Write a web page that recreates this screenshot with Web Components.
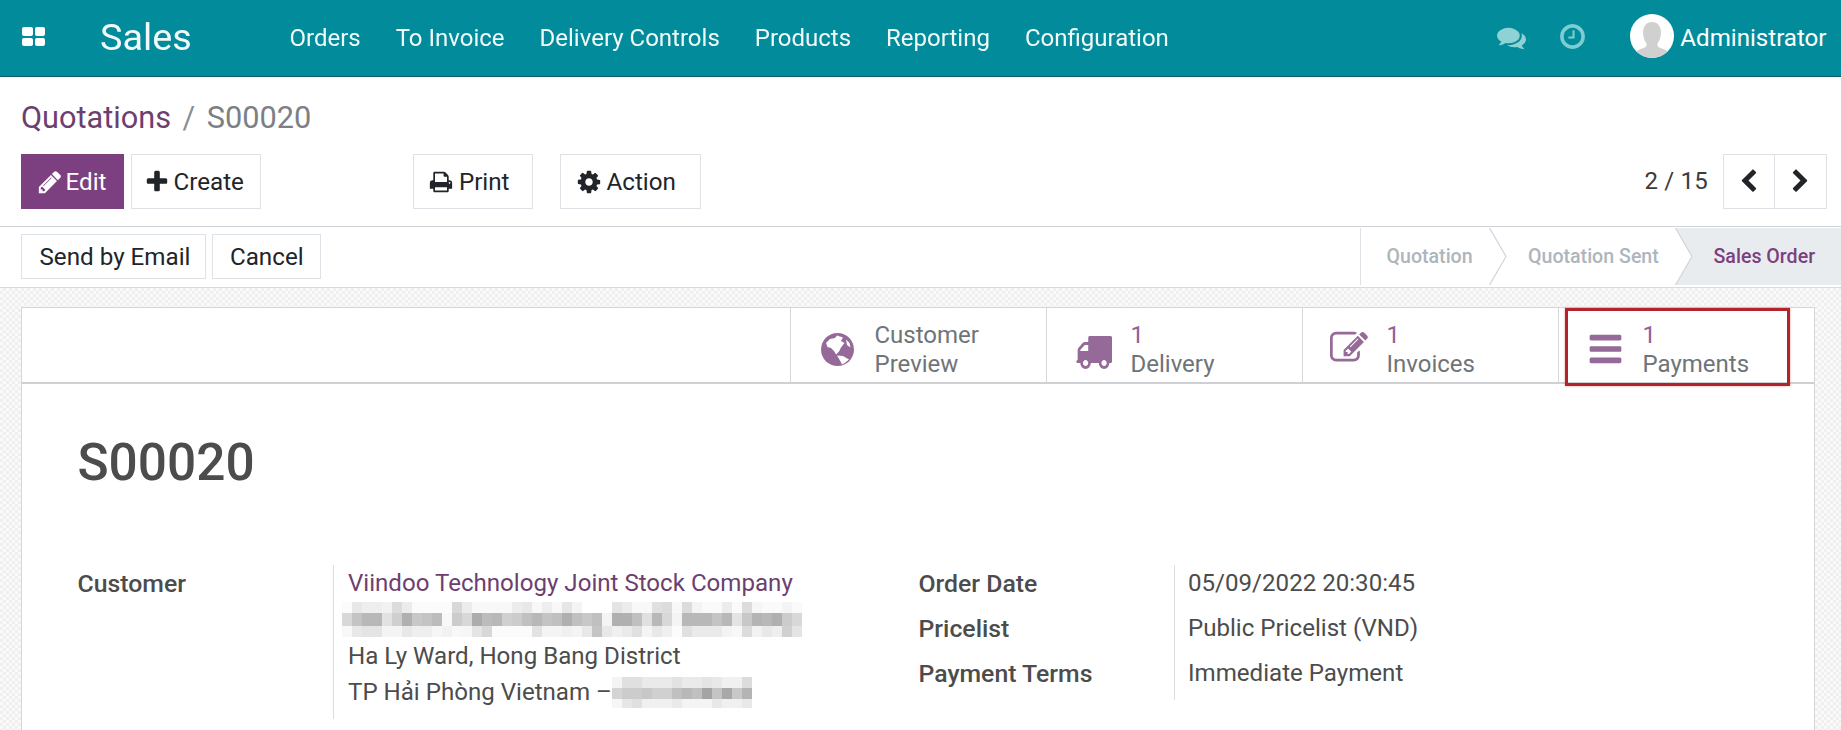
<!DOCTYPE html>
<html lang="en"><head><meta charset="utf-8"><title>S00020</title>
<style>
html,body{margin:0;padding:0;background:#fff}
body{width:1841px;height:730px;overflow:hidden;font-family:Roboto,"Liberation Sans",sans-serif;font-size:24px;color:#4c4c4c}
</style></head><body>
<app-shell></app-shell>
<script>
const P={
pencil:"M491 1536l91-91-235-235-91 91v107h128v128h107zm523-928q0-22-22-22-10 0-17 7l-542 542q-7 7-7 17 0 22 22 22 10 0 17-7l542-542q7-7 7-17zm-54-192l416 416-832 832h-416v-416zm683 96q0 53-37 90l-166 166-416-416 166-165q36-38 90-38 53 0 91 38l235 234q37 39 37 91z",
plus:"M1600 736v192q0 40-28 68t-68 28h-416v416q0 40-28 68t-68 28h-192q-40 0-68-28t-28-68v-416h-416q-40 0-68-28t-28-68v-192q0-40 28-68t68-28h416v-416q0-40 28-68t68-28h192q40 0 68 28t28 68v416h416q40 0 68 28t28 68z",
print:"M448 1536h896v-256h-896v256zm0-640h896v-384h-160q-40 0-68-28t-28-68v-160h-640v640zm1152 64q0-26-19-45t-45-19-45 19-19 45 19 45 45 19 45-19 19-45zm128 0v416q0 13-9.500 22.500t-22.500 9.500h-224v160q0 40-28 68t-68 28h-960q-40 0-68-28t-28-68v-160h-224q-13 0-22.500-9.500t-9.500-22.500v-416q0-79 56.500-135.500t135.500-56.500h64v-544q0-40 28-68t68-28h672q40 0 88 20t76 48l152 152q28 28 48 76t20 88v256h64q79 0 135.500 56.500t56.500 135.500z",
cog:"M1152 896q0-106-75-181t-181-75-181 75-75 181 75 181 181 75 181-75 75-181zm512-109v222q0 12-8 23t-20 13l-185 28q-19 54-39 91 35 50 107 138 10 12 10 25t-9 23q-27 37-99 108t-94 71q-12 0-26-9l-138-108q-44 23-91 38-16 136-29 186-7 28-36 28h-222q-14 0-24.500-8.500t-11.500-21.500l-28-184q-49-16-90-37l-141 107q-10 9-25 9-14 0-25-11-126-114-165-168-7-10-7-23 0-12 8-23 15-21 51-66.500t54-70.500q-27-50-41-99l-183-27q-13-2-21-12.500t-8-23.500v-222q0-12 8-23t19-13l186-28q14-46 39-92-40-57-107-138-10-12-10-24 0-10 9-23 26-36 98.500-107.500t94.500-71.500q13 0 26 10l138 107q44-23 91-38 16-136 29-186 7-28 36-28h222q14 0 24.500 8.500t11.500 21.500l28 184q49 16 90 37l142-107q9-9 24-9 13 0 25 10 129 119 165 170 7 8 7 22 0 12-8 23-15 21-51 66.500t-54 70.500q26 50 41 98l183 28q13 2 21 12.500t8 23.500z",
left:"M1427 301l-531 531 531 531q19 19 19 45t-19 45l-166 166q-19 19-45 19t-45-19l-742-742q-19-19-19-45t19-45l742-742q19-19 45-19t45 19l166 166q19 19 19 45t-19 45z",
right:"M1363 877l-742 742q-19 19-45 19t-45-19l-166-166q-19-19-19-45t19-45l531-531-531-531q-19-19-19-45t19-45l166-166q19-19 45-19t45 19l742 742q19 19 19 45t-19 45z",
comments:"M1408 768q0 139-94 257t-256.500 186.500-353.500 68.500q-86 0-176-16-124 88-278 128-36 9-86 16h-3q-11 0-20.500-8t-11.500-21q-1-3-1-6.500t.5-6.500 2-6l2.500-5 3.500-5.500 4-5 4.500-5 4-4.500q5-6 23-25t26-29.500 22.500-29 25-38.500 20.500-44q-124-72-195-177t-71-224q0-139 94-257t256.500-186.500 353.500-68.500 353.500 68.500 256.500 186.500 94 257zm384 256q0 120-71 224.500t-195 176.500q10 24 20.500 44t25 38.500 22.500 29 26 29.500 23 25q1 1 4 4.500t4.500 5 4 5 3.500 5.500l2.500 5 2 6 .5 6.500-1 6.500q-3 14-13 22t-22 7q-50-7-86-16-154-40-278-128-90 16-176 16-271 0-472-132 58 4 88 4 161 0 309-45t264-129q125-92 192-212t67-254q0-77-23-152 129 71 204 178t75 230z",
clock:"M1024 544v448q0 14-9 23t-23 9h-320q-14 0-23-9t-9-23v-64q0-14 9-23t23-9h224v-352q0-14 9-23t23-9h64q14 0 23 9t9 23zm416 352q0-148-73-273t-198-198-273-73-273 73-198 198-73 273 73 273 198 198 273 73 273-73 198-198 73-273zm224 0q0 209-103 385.500t-279.500 279.500-385.500 103-385.500-103-279.500-279.500-103-385.500 103-385.500 279.500-279.500 385.500-103 385.500 103 279.500 279.500 103 385.500z",
truck:"M640 1408q0-52-38-90t-90-38-90 38-38 90 38 90 90 38 90-38 38-90zm-384-512h384v-256h-158q-13 0-22 9l-195 195q-9 9-9 22v30zm1280 512q0-52-38-90t-90-38-90 38-38 90 38 90 90 38 90-38 38-90zm256-1088v1024q0 15-4 26.500t-13.500 18.500-16.500 11.500-23.500 6-22.500 2-25.500 0-22.500-.5q0 106-75 181t-181 75-181-75-75-181h-384q0 106-75 181t-181 75-181-75-75-181h-64q-3 0-22.500.5t-25.500 0-22.500-2-23.500-6-16.500-11.500-13.500-18.500-4-26.500q0-26 19-45t45-19v-320q0-8-.5-35t0-38 2.500-34.500 6.500-37 14-30.500 22.500-30l198-198q19-19 50.500-32t58.500-13h160v-192q0-26 19-45t45-19h1024q26 0 45 19t19 45z",
edit:"M888 1184l116-116-152-152-116 116v56h96v96h56zm440-720q-16-16-33 1l-350 350q-17 17-1 33t33-1l350-350q17-17 1-33zm80 594v190q0 119-84.500 203.500t-203.500 84.500h-832q-119 0-203.500-84.500t-84.500-203.500v-832q0-119 84.500-203.500t203.500-84.500h832q63 0 117 25 15 7 18 23 3 17-9 29l-49 49q-14 14-32 8-23-6-45-6h-832q-66 0-113 47t-47 113v832q0 66 47 113t113 47h832q66 0 113-47t47-113v-126q0-13 9-22l64-64q15-15 35-7t20 29zm-96-738l288 288-672 672h-288v-288zm444 132l-92 92-288-288 92-92q28-28 68-28t68 28l152 152q28 28 28 68t-28 68z",
bars:"M1664 1344v128q0 26-19 45t-45 19h-1408q-26 0-45-19t-19-45v-128q0-26 19-45t45-19h1408q26 0 45 19t19 45zm0-512v128q0 26-19 45t-45 19h-1408q-26 0-45-19t-19-45v-128q0-26 19-45t45-19h1408q26 0 45 19t19 45zm0-512v128q0 26-19 45t-45 19h-1408q-26 0-45-19t-19-45v-128q0-26 19-45t45-19h1408q26 0 45 19t19 45z"
};
const ico=(n,w,h)=>`<svg width="${w}" height="${h}" viewBox="0 0 1792 1792" preserveAspectRatio="none" fill="currentColor" style="display:block;flex:none"><path d="${P[n]}"/></svg>`;
class Base extends HTMLElement{
  constructor(){super();this.attachShadow({mode:'open'});}
  html(s){this.shadowRoot.innerHTML=s;}
}
const def=(n,c)=>customElements.define(n,c);

def('nav-item',class extends Base{connectedCallback(){this.html(`<style>:host{display:block;padding:0 17.5px;color:#fff;font-size:24px;line-height:76px;font-weight:400;opacity:.95}</style><slot></slot>`);}});

def('top-nav',class extends Base{connectedCallback(){this.html(`<style>
:host{display:flex;align-items:stretch;height:76px;background:#028c9b;border-bottom:1px solid #045f6a;color:#fff}
.apps{width:23px;height:19px;margin:27px 0 0 22px;display:grid;grid-template-columns:1fr 1fr;gap:2px;flex:none}
.apps i{background:#fff;border-radius:2px}
.brand{font-size:37.8px;font-weight:400;line-height:74px;margin-left:55px;width:172px;flex:none;opacity:.95}
.menu{display:flex}
.right{margin-left:auto;display:flex;align-items:flex-start;padding-right:14.5px}
.comments{margin:23.5px 0 0;color:#8fd2d6}
.clock{margin:22px 0 0 32px;color:#7fccd2}
.ava{width:44px;height:44px;border-radius:50%;background:#fff;margin:14px 0 0 43px;overflow:hidden;flex:none}
.user{font-size:24.1px;line-height:76px;margin-left:6.5px;font-weight:400;white-space:nowrap}
</style>
<div class="apps"><i></i><i></i><i></i><i></i></div>
<div class="brand">Sales</div>
<div class="menu"><nav-item>Orders</nav-item><nav-item>To Invoice</nav-item><nav-item>Delivery Controls</nav-item><nav-item>Products</nav-item><nav-item>Reporting</nav-item><nav-item>Configuration</nav-item></div>
<div class="right">
<span class="comments">${ico('comments',29,27)}</span>
<span class="clock">${ico('clock',29,29)}</span>
<div class="ava"><svg width="44" height="44" viewBox="0 0 44 44" style="display:block"><path fill="#d0d0d0" d="M22 8c6 0 9 4.500 9 11 0 4-1.600 8-3.500 10.500-.6 2.500.5 3.500 3 4.500 3.500 1.200 7 2.500 9 4.500C35.500 42 29 44 22 44S8.500 42 4.500 38.500c2-2 5.500-3.300 9-4.500 2.500-1 3.600-2 3-4.500C14.600 27 13 23 13 19c0-6.500 3-11 9-11z"/></svg></div>
<div class="user">Administrator</div>
</div>`);}});

def('bread-crumb',class extends Base{connectedCallback(){this.html(`<style>
:host{display:flex;align-items:center;height:77px;font-size:30.7px;padding-top:4px;box-sizing:border-box;white-space:nowrap}
.a{color:#6c3f70}.s{color:#8a8f94;margin:0 11.5px}.c{color:#7c8085}
</style><span class="a">Quotations</span><span class="s">/</span><span class="c">S00020</span>`);}});

def('odoo-btn',class extends Base{connectedCallback(){
 const icon=this.getAttribute('icon'),pri=this.hasAttribute('primary');
 const pl=this.getAttribute('pl')||'17px',pr=this.getAttribute('pr')||pl,g=this.getAttribute('gap')||'3px',s=this.getAttribute('iw')||26;
 this.html(`<style>
:host{display:inline-flex;align-items:center;height:var(--h,55px);box-sizing:border-box;border:1.5px solid ${pri?'#7c3f80':'#dee2e6'};background:${pri?'#7c3f80':'#fff'};color:${pri?'#fff':'#212529'};font-size:24.2px;padding:0 ${pr} 0 ${pl};white-space:nowrap;gap:${g};flex:none}
</style>${icon?ico(icon,s,s):''}<slot></slot>`);}});

def('pager-bar',class extends Base{connectedCallback(){this.html(`<style>
:host{display:flex;align-items:center;margin-left:auto;font-size:24px;color:#3c3c3c;letter-spacing:.2px}
.count{margin-right:14.5px;position:relative;top:-1px}
.b{width:52px;height:55px;box-sizing:border-box;border:1.5px solid #dee2e6;display:flex;align-items:center;justify-content:center;color:#212529}
.b+.b{border-left:0}
</style><span class="count">2 / 15</span><div class="b">${ico('left',25,25)}</div><div class="b">${ico('right',25,25)}</div>`);}});

def('status-bar',class extends Base{connectedCallback(){
 const chev=`<svg class="chev" width="18" height="57" viewBox="0 0 18 57"><path d="M.5 0L17 28.500.5 57" fill="#fff" stroke="#ced4da" stroke-width="1.200"/></svg>`;
 this.html(`<style>
:host{display:flex;margin-left:auto;height:57px;align-self:flex-start;margin-top:1px;font-size:19.6px;font-weight:500;color:#adb5bd;border-left:1.200px solid #dee2e6;white-space:nowrap}
.it{position:relative;display:flex;align-items:center;box-sizing:border-box}
.q{width:128.500px;padding-left:26px}
.s{width:186px;padding-left:39px}
.o{width:166px;padding-left:38.5px;background:#e9ecef;color:#7c3f80;clip-path:polygon(0 0,100% 0,100% 100%,0 100%,17px 50%)}
.chev{position:absolute;left:100%;top:0;z-index:1;margin-left:-.5px}
</style><div class="it q">Quotation${chev}</div><div class="it s">Quotation Sent${chev}</div><div class="it o">Sales Order</div>`);}});

def('control-panel',class extends Base{connectedCallback(){this.html(`<style>
:host{display:block;background:#fff;border-bottom:1.500px solid #d8dade}
.top{padding:0 14.5px 17px 21px;border-bottom:1.500px solid #d0d3d8}
.bar{display:flex;align-items:center}
.gap1{margin-left:7px}.gap2{margin-left:152px}.gap3{margin-left:26.5px}
.st{display:flex;padding-left:21px;height:59.5px;align-items:flex-start}
.st odoo-btn{--h:45px;margin-top:7px}
.st odoo-btn+odoo-btn{margin-left:6px}
</style>
<div class="top"><bread-crumb></bread-crumb>
<div class="bar">
<odoo-btn primary icon="pencil" pl="14.5px" pr="16.5px">Edit</odoo-btn>
<odoo-btn class="gap1" icon="plus" pl="12.5px" pr="16.5px">Create</odoo-btn>
<odoo-btn class="gap2" icon="print" iw="24" pl="14.5px" pr="22.5px" gap="6px">Print</odoo-btn>
<odoo-btn class="gap3" icon="cog" pl="15px" pr="24px" gap="5px">Action</odoo-btn>
<pager-bar></pager-bar>
</div></div>
<div class="st"><odoo-btn pl="17.5px" pr="15px">Send by Email</odoo-btn><odoo-btn pl="16.5px">Cancel</odoo-btn><status-bar></status-bar></div>`);}});

const ICO_OFFSET={globe:9,truck:12,edit:6,bars:9};
def('stat-button',class extends Base{connectedCallback(){
 const n=this.getAttribute('icon'),num=this.getAttribute('num'),w=+this.getAttribute('iw'),h=+this.getAttribute('ih');
 const g=n==='globe'?`<svg width="33" height="33" viewBox="0 0 33 33" style="display:block"><circle cx="16.500" cy="16.500" r="16.500" fill="currentColor"/><path fill="#fff" d="M5 10l4-4 5-1 2-2.500 6 2-2 3.500 3.500 2-3.500 4.500-2 4-3 3-2-3.500-3-3-3.500-1zM16 22.500l6 .5 6 3.500-3.500 3-3.500 2-2-4zM25 6.500l3.500 3.500 1 4.500-3.500-2.500z"/></svg>`:ico(n,w,h);
 this.html(`<style>
:host{display:flex;width:256px;height:74px;box-sizing:border-box;border-left:1.200px solid #d6d9dc;position:relative;color:#6f7478;font-size:24px;line-height:29.5px;flex:none}
.ic{width:42px;margin-left:25px;display:flex;align-items:center;justify-content:center;color:#956a99;flex:none;padding-top:${ICO_OFFSET[n]}px;box-sizing:border-box}
.tx{margin-left:16.5px;padding-top:13px;white-space:nowrap}
.n{color:#8f6195;display:block}
.mark{position:absolute;left:6px;top:0;width:225px;height:78.500px;border:3px solid #b0242a;box-sizing:border-box;box-shadow:0 0 2px rgba(230,80,90,.6)}
</style><div class="ic">${g}</div><div class="tx">${num?`<span class="n">${num}</span>`:''}<slot></slot></div>${this.hasAttribute('marked')?'<div class="mark"></div>':''}`);}});

def('button-box',class extends Base{connectedCallback(){this.html(`<style>
:host{display:flex;justify-content:flex-end;height:74.5px;border-bottom:2.500px solid #ced0d3}
</style><slot></slot>`);}});

def('pixel-mosaic',class extends Base{connectedCallback(){
 const rows=this.getAttribute('rows').split('/').map(r=>r.trim().split(/\s+/));
 const hs=this.getAttribute('hs').split(',').map(Number);
 let y=0,s='';
 rows.forEach((r,i)=>{r.forEach((c,j)=>{s+=`<rect x="${j*10}" y="${y}" width="10.500" height="${hs[i]+.5}" fill="#${c+c+c}"/>`;});y+=hs[i];});
 const w=rows[0].length*10;
 this.html(`<style>:host{display:inline-block;vertical-align:middle;line-height:0}svg{display:block;filter:blur(.5px)}</style><svg width="${w}" height="${y}" viewBox="0 0 ${w} ${y}">${s}</svg>`);}});

def('field-row',class extends Base{connectedCallback(){this.html(`<style>
:host{display:grid;grid-template-columns:var(--lab) 1fr}
.l{font-weight:500;font-size:24.8px;color:#4c4c4c;line-height:37px;height:var(--rh,45px)}
.v{border-left:1.200px solid #dcdfe2;padding-left:var(--vp);line-height:37px;font-size:24.1px;color:#4c4c4c;white-space:nowrap;padding-bottom:var(--vb,8px)}
</style><div class="l"><slot name="label"></slot></div><div class="v"><slot></slot></div>`);}});

def('sale-form',class extends Base{connectedCallback(){this.html(`<style>
:host{display:block;padding:0 0 0 55.5px}
h1{margin:0;padding-top:49px;font-size:51.4px;font-weight:500;line-height:59px;color:#4c4c4c;height:132px;letter-spacing:0}
.cols{display:flex}
.c1{width:841px;flex:none;--lab:255px;--vp:14.5px;--vb:8px;--rh:auto}
.c2{--lab:255px;--vp:13.5px;width:600px}
.line{height:36.5px;display:flex;align-items:center}
a{color:#6c3f70;text-decoration:none}
.m1{margin-left:-6px}
</style>
<h1>S00020</h1>
<div class="cols">
<div class="c1"><field-row><span slot="label">Customer</span>
<div class="line"><a>Viindoo Technology Joint Stock Company</a></div>
<div class="line m1"><pixel-mosaic hs="11,13,11" rows="fb e8 ee ee f2 dc ec fb fb fb fb d8 ec f8 f8 f8 f8 ec e8 f8 ee f8 e6 f4 ff ff ff e4 ec f8 f8 e0 dc f8 dc f4 fa fa ec fa dc f6 fa fa f4 fa/d8 c4 b8 b8 e2 cf b0 c8 c4 bc f8 cc d8 ac bc b8 d0 cc c0 b8 c4 c0 b0 c0 c8 c0 f4 b0 b0 c0 e0 b8 d8 f4 b8 b8 b8 c4 b8 e4 c8 b4 b8 b0 cc d8/f8 e8 e4 e4 f4 f4 e8 ee ee f6 f2 f8 f6 e4 d8 fb fb fb fb e2 f4 f4 f0 f4 e8 c4 e8 f0 ea e0 f4 e8 f0 fc e0 ea ea ea f4 f8 dc f2 e8 ee d0 e4"></pixel-mosaic></div>
<div class="line">Ha Ly Ward, Hong Bang District</div>
<div class="line">TP Hải Phòng Vietnam –<pixel-mosaic hs="11,11,9" rows="f4 e0 e0 ea ea ea e2 ea ea e4 e8 f0 f0 dc/d4 cc cc c8 d0 d0 c0 b8 c0 a4 c4 a8 c8 b4/f6 e6 e0 f0 f0 f0 ea f4 f4 f4 e8 f0 f0 e8"></pixel-mosaic></div>
</field-row></div>
<div class="c2">
<field-row><span slot="label">Order Date</span>05/09/2022 20:30:45</field-row>
<field-row><span slot="label">Pricelist</span>Public Pricelist (VND)</field-row>
<field-row><span slot="label">Payment Terms</span>Immediate Payment</field-row>
</div></div>`);}});

def('form-sheet',class extends Base{connectedCallback(){this.html(`<style>
:host{display:block;margin:19px 26px 0 21px;background:#fff;border:1.200px solid #d4d6d8;height:500px;box-sizing:border-box}
</style><slot></slot>`);}});

def('app-shell',class extends Base{connectedCallback(){this.html(`<style>
:host{display:block;height:730px;overflow:hidden;background:repeating-conic-gradient(#efefef 0 25%,#fafafa 0 50%) 0 0/6px 6px}
</style>
<top-nav></top-nav>
<control-panel></control-panel>
<form-sheet>
<button-box>
<stat-button icon="globe">Customer<br>Preview</stat-button>
<stat-button icon="truck" iw="37" ih="42" num="1">Delivery</stat-button>
<stat-button icon="edit" iw="38" ih="38" num="1">Invoices</stat-button>
<stat-button icon="bars" iw="37" ih="40" num="1" marked>Payments</stat-button>
</button-box>
<sale-form></sale-form>
</form-sheet>`);}});
</script>
</body></html>
